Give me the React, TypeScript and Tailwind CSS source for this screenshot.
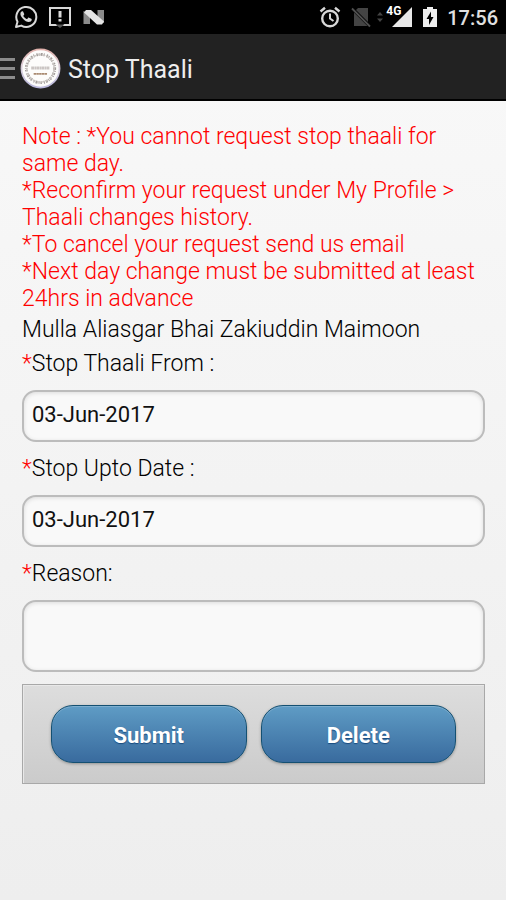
import type { ReactNode } from "react";

function StatusBar() {
  return (
    <div className="flex h-[34px] items-center justify-between bg-black pl-[14px] pr-2 text-[#d8d8d8]">
      <div className="flex items-center gap-[10px]">
        <svg width="24" height="24" viewBox="0 0 24 24" fill="none" aria-label="WhatsApp">
          <path
            d="M2 22l1.500-5.300A10 10 0 1 1 7.300 20.600z"
            stroke="currentColor"
            strokeWidth="2"
            strokeLinejoin="round"
          />
          <path
            d="M8.300 6.300c-.9.1-1.900 1-1.900 2.600 0 1.700 1.300 3.500 2.800 5 1.700 1.700 3.700 3.100 5.500 3.100 1.600 0 2.900-1 3-2 .1-.8 0-1-.4-1.200l-2.300-1.100c-.5-.2-.8-.1-1 .2l-.8 1c-.2.2-.5.200-.8.100-1.300-.6-2.200-1.500-3-2.700-.2-.3-.1-.5.1-.8l.6-.8c.2-.3.100-.6 0-.9l-.9-2c-.2-.4-.5-.5-.9-.5z"
            fill="currentColor"
          />
        </svg>
        <svg width="24" height="24" viewBox="0 0 24 24" fill="none" aria-label="Message alert">
          <path d="M2 3h20v17H2z" stroke="currentColor" strokeWidth="2" />
          <path d="M8 19h8l-4 4.500z" fill="#000" />
          <path d="M7.500 19.500L12 23l4.500-3.500z" fill="#555" />
          <path d="M12 6v6.500M12 14v2.500" stroke="currentColor" strokeWidth="3" />
        </svg>
        <svg width="24" height="24" viewBox="0 0 24 24" aria-label="Android N">
          <path d="M1.500 6L8 9v10H1.500z" fill="#8b8b8b" />
          <path d="M15.500 5h6.500v13l-6.500-3z" fill="#8b8b8b" />
          <path d="M2 7.500L4 5h5l13 11.500-2 3h-5z" fill="#e4e4e4" />
        </svg>
      </div>
      <div className="flex items-center">
        <svg width="22" height="22" viewBox="0 0 22 22" fill="none" stroke="currentColor" aria-label="Alarm">
          <circle cx="11" cy="12.500" r="7.800" strokeWidth="2.400" />
          <path d="M11 7.500v5l3.500 2.500" strokeWidth="2" />
          <path d="M1.500 5.500L6 1.800M20.500 5.500L16 1.800" strokeWidth="2.400" />
        </svg>
        <svg className="ml-[10px]" width="20" height="22" viewBox="0 0 20 22" aria-label="No SIM">
          <path d="M7 2h10v14L5 4z" fill="#444" />
          <path d="M3 6.500L16.500 20H3z" fill="#444" />
          <path d="M1 2.500l18 18" stroke="#505050" strokeWidth="1.800" />
        </svg>
        <svg className="ml-[6px]" width="6" height="12" viewBox="0 0 6 12" aria-hidden="true">
          <path d="M0 4.500L3 1l3 3.500zM0 7.500L3 11l3-3.500z" fill="#444" />
        </svg>
        <div className="relative ml-[3px] h-[22px] w-[27px] text-white">
          <svg width="27" height="22" viewBox="0 0 27 22" aria-label="Signal">
            <path d="M26 1v20H6z" fill="#e8e8e8" />
          </svg>
          <span className="absolute left-0 top-0 bg-black text-[12px] font-bold leading-[11px]">4G</span>
        </div>
        <svg className="ml-[10px]" width="14" height="22" viewBox="0 0 14 22" aria-label="Battery charging">
          <path d="M4 1h6v2h4v18H0V3h4z" fill="#eee" />
          <path d="M8 5.500L3.500 13H6v6l4.500-8H8z" fill="#000" />
        </svg>
        <time className="ml-[10px] pt-[2px] text-[20px] font-medium leading-6 text-[#e0e0e0]">17:56</time>
      </div>
    </div>
  );
}

function Logo() {
  return (
    <svg className="ml-[5px]" width="41" height="41" viewBox="0 0 42 42" aria-label="Community logo">
      <defs>
        <linearGradient id="rim" x1="0" y1="0" x2="0" y2="1">
          <stop offset="0" stopColor="#e3b4ae" />
          <stop offset="0.5" stopColor="#d9d0dd" />
          <stop offset="1" stopColor="#b9b7dc" />
        </linearGradient>
      </defs>
      <circle cx="21" cy="21" r="19.500" fill="#fdfcfb" stroke="url(#rim)" strokeWidth="1.800" />
      <circle cx="21" cy="21" r="14.500" fill="none" stroke="#a39e9b" strokeWidth="3" strokeDasharray="1.500 1 .8 1.200 2 1.100 1 2" />
      <circle cx="21" cy="21" r="14" fill="none" stroke="#c9c4c1" strokeWidth="1.500" strokeDasharray="3 1.500" />
      <path d="M11.500 20.500h19" stroke="#cbc5c3" strokeWidth="3" strokeDasharray="3 .4 1.500 .3" />
      <path d="M14 26.500h14" stroke="#a98970" strokeWidth="2" strokeDasharray="2.500 .3" />
    </svg>
  );
}

function Header() {
  return (
    <header className="flex h-[67px] items-center border-b-2 border-black bg-[#222] pt-[3px] text-[#eee]">
      <button type="button" aria-label="Open menu" className="flex w-[15px] flex-col gap-[6px]">
        <span className="h-[3px] bg-[#8c8c8c]" />
        <span className="h-[3px] bg-[#8c8c8c]" />
        <span className="h-[3px] bg-[#8c8c8c]" />
      </button>
      <Logo />
      <h1 className="ml-[7px] pt-[3px] text-[25px] leading-8">Stop Thaali</h1>
    </header>
  );
}

function FieldLabel({ htmlFor, children }: { htmlFor: string; children: ReactNode }) {
  return (
    <label htmlFor={htmlFor} className="block leading-[34px]">
      <span className="text-[#f00]">*</span>
      {children}
    </label>
  );
}

const fieldClass =
  "mt-[9px] block w-full rounded-[14px] border-2 border-[#bcbcbc] bg-[#f9f9f9] px-2 pb-[3px] text-[22px] font-normal text-[#111] shadow-[inset_0_1px_4px_rgba(0,0,0,0.12)] outline-none";

const buttonClass =
  "h-[58px] flex-1 rounded-[22px] border border-[#145072] bg-linear-to-b from-[#5f9cc5] to-[#396b9e] pt-[2px] text-[22px] font-bold text-white shadow-[0_1px_3px_rgba(0,0,0,0.3),inset_0_1px_0_rgba(255,255,255,0.2)] [text-shadow:0_1px_1px_#194b7e]";

export default function App() {
  return (
    <div className="flex min-h-screen flex-col bg-linear-to-b from-[#f9f9f9] to-[#eeeeee] font-[Roboto,sans-serif] text-[23px] text-black">
      <StatusBar />
      <Header />
      <main className="pt-[22px] pr-[21px] pb-6 pl-[22px] font-light">
        <p className="leading-[27px] text-[#f00]">
          Note : *You cannot request stop thaali for same day.
          <br />
          *Reconfirm your request under My Profile &gt; Thaali changes history.
          <br />
          *To cancel your request send us email
          <br />
          *Next day change must be submitted at least 24hrs in advance
        </p>
        <p className="pt-px leading-[34px]">Mulla Aliasgar Bhai Zakiuddin Maimoon</p>
        <form onSubmit={(e) => e.preventDefault()}>
          <FieldLabel htmlFor="from">Stop Thaali From :</FieldLabel>
          <input id="from" type="text" defaultValue="03-Jun-2017" className={`${fieldClass} mb-[10px] h-[52px]`} />
          <FieldLabel htmlFor="upto">Stop Upto Date :</FieldLabel>
          <input id="upto" type="text" defaultValue="03-Jun-2017" className={`${fieldClass} mb-[10px] h-[52px]`} />
          <FieldLabel htmlFor="reason">Reason:</FieldLabel>
          <textarea id="reason" className={`${fieldClass} mb-3 h-[72px] resize-none`} />
          <div className="flex gap-[14px] border border-[#a8a8a8] bg-linear-to-b from-[#dddddd] to-[#cbcbcb] px-7 py-5 shadow-[inset_1px_1px_0_#e8e8e8]">
            <button type="submit" className={buttonClass}>Submit</button>
            <button type="button" className={buttonClass}>Delete</button>
          </div>
        </form>
      </main>
    </div>
  );
}
